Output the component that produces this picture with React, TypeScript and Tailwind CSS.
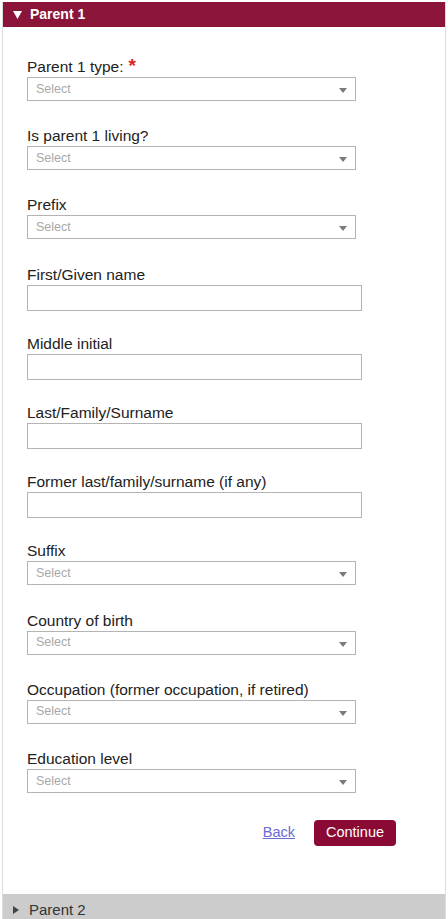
import React from 'react';

type Field = {
  label: string;
  kind: 'select' | 'input';
  required?: boolean;
};

const fields: Field[] = [
  { label: 'Parent 1 type:', kind: 'select', required: true },
  { label: 'Is parent 1 living?', kind: 'select' },
  { label: 'Prefix', kind: 'select' },
  { label: 'First/Given name', kind: 'input' },
  { label: 'Middle initial', kind: 'input' },
  { label: 'Last/Family/Surname', kind: 'input' },
  { label: 'Former last/family/surname (if any)', kind: 'input' },
  { label: 'Suffix', kind: 'select' },
  { label: 'Country of birth', kind: 'select' },
  { label: 'Occupation (former occupation, if retired)', kind: 'select' },
  { label: 'Education level', kind: 'select' },
];

function SelectBox() {
  return (
    <div className="relative flex h-[24px] w-[329px] items-center border border-[#b4b4b4] bg-white pl-[8px]">
      <span className="text-[12.5px] text-[#a8a8a8]">Select</span>
      <svg className="absolute right-[8px] top-[10px]" width="8" height="5" viewBox="0 0 8 5">
        <path d="M0 0 L8 0 L4 5 Z" fill="#7a7a7a" />
      </svg>
    </div>
  );
}

function InputBox() {
  return <div className="h-[26px] w-[335px] border border-[#b4b4b4] bg-white" />;
}

export default function App() {
  return (
    <div className="h-[925px] w-[448px] overflow-hidden bg-white px-[2px] pt-[2px] font-['Liberation_Sans',Arial,sans-serif]">
      <div className="flex h-full flex-col border-x border-[#dcdcdc]">
        <div className="flex h-[25px] shrink-0 items-center bg-[#8a1538] pl-[10px] text-[14px] font-bold text-white">
          <svg className="mr-[8px]" width="9" height="8" viewBox="0 0 9 8">
            <path d="M0 0 L9 0 L4.5 8 Z" fill="#ffffff" />
          </svg>
          <span>Parent 1</span>
        </div>

        <div className="flex-1 pl-[24px] pt-[30px]">
          {fields.map((f) => (
            <div key={f.label} className="flex h-[69.2px] flex-col">
              <div className="h-[20px] text-[15.5px] leading-[20px] text-[#222]">
                {f.label}
                {f.required && (
                  <span className="ml-[5px] align-top text-[19px] font-bold leading-[18px] text-[#e0261e]">*</span>
                )}
              </div>
              {f.kind === 'select' ? <SelectBox /> : <InputBox />}
            </div>
          ))}

          <div className="mt-[2px] flex w-[369px] items-center justify-end gap-[19px]">
            <a href="#" className="text-[14.5px] text-[#6b6bd6] underline">
              Back
            </a>
            <button className="h-[26px] w-[82px] rounded-[4px] bg-[#8a0a35] text-[14.5px] text-white">
              Continue
            </button>
          </div>
        </div>

        <div className="flex h-[31px] shrink-0 items-start bg-[#cccccc] pl-[10px] pt-[6px] text-[15px] leading-[20px] text-[#333]">
          <svg className="mr-[10px] mt-[6px]" width="6" height="8" viewBox="0 0 6 8">
            <path d="M0 0 L6 4 L0 8 Z" fill="#444444" />
          </svg>
          <span>Parent 2</span>
        </div>
      </div>
    </div>
  );
}
